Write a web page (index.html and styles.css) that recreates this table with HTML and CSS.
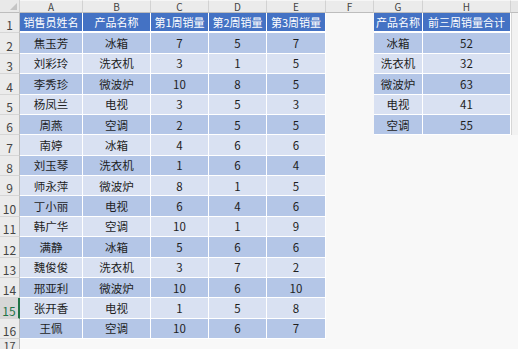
FILE: index.html
```html
<!DOCTYPE html>
<html lang="zh-CN">
<head>
    <meta charset="UTF-8">
    <title>销售统计</title>
    <link rel="stylesheet" href="styles.css">
</head>
<body>
    <div class="sheet">
        <div class="row">
            <div class="corner"></div>
            <div class="hd">A</div><div class="hd">B</div><div class="hd">C</div><div class="hd">D</div><div class="hd">E</div><div class="hd">F</div><div class="hd">G</div><div class="hd">H</div><div class="hd end"></div>
        </div>
        <div class="row">
            <div class="rn">1</div>
            <div class="th">销售员姓名</div><div class="th">产品名称</div><div class="th">第1周销量</div><div class="th">第2周销量</div><div class="th">第3周销量</div>
            <div class="no"></div>
            <div class="th">产品名称</div><div class="th">前三周销量合计</div>
            <div class="no end"></div>
        </div>
        <div class="row dk">
            <div class="rn">2</div>
            <div class="c">焦玉芳</div><div class="c">冰箱</div><div class="c">7</div><div class="c">5</div><div class="c">7</div>
            <div class="no"></div>
            <div class="c">冰箱</div><div class="c">52</div>
            <div class="no end"></div>
        </div>
        <div class="row lt">
            <div class="rn">3</div>
            <div class="c">刘彩玲</div><div class="c">洗衣机</div><div class="c">3</div><div class="c">1</div><div class="c">5</div>
            <div class="no"></div>
            <div class="c">洗衣机</div><div class="c">32</div>
            <div class="no end"></div>
        </div>
        <div class="row dk">
            <div class="rn">4</div>
            <div class="c">李秀珍</div><div class="c">微波炉</div><div class="c">10</div><div class="c">8</div><div class="c">5</div>
            <div class="no"></div>
            <div class="c">微波炉</div><div class="c">63</div>
            <div class="no end"></div>
        </div>
        <div class="row lt">
            <div class="rn">5</div>
            <div class="c">杨凤兰</div><div class="c">电视</div><div class="c">3</div><div class="c">5</div><div class="c">3</div>
            <div class="no"></div>
            <div class="c">电视</div><div class="c">41</div>
            <div class="no end"></div>
        </div>
        <div class="row dk">
            <div class="rn">6</div>
            <div class="c">周燕</div><div class="c">空调</div><div class="c">2</div><div class="c">5</div><div class="c">5</div>
            <div class="no"></div>
            <div class="c">空调</div><div class="c">55</div>
            <div class="no end"></div>
        </div>
        <div class="row lt">
            <div class="rn">7</div>
            <div class="c">南婷</div><div class="c">冰箱</div><div class="c">4</div><div class="c">6</div><div class="c">6</div>
            <div class="no wide"></div>
        </div>
        <div class="row dk">
            <div class="rn">8</div>
            <div class="c">刘玉琴</div><div class="c">洗衣机</div><div class="c">1</div><div class="c">6</div><div class="c">4</div>
            <div class="no wide"></div>
        </div>
        <div class="row lt">
            <div class="rn">9</div>
            <div class="c">师永萍</div><div class="c">微波炉</div><div class="c">8</div><div class="c">1</div><div class="c">5</div>
            <div class="no wide"></div>
        </div>
        <div class="row dk">
            <div class="rn">10</div>
            <div class="c">丁小丽</div><div class="c">电视</div><div class="c">6</div><div class="c">4</div><div class="c">6</div>
            <div class="no wide"></div>
        </div>
        <div class="row lt">
            <div class="rn">11</div>
            <div class="c">韩广华</div><div class="c">空调</div><div class="c">10</div><div class="c">1</div><div class="c">9</div>
            <div class="no wide"></div>
        </div>
        <div class="row dk">
            <div class="rn">12</div>
            <div class="c">满静</div><div class="c">冰箱</div><div class="c">5</div><div class="c">6</div><div class="c">6</div>
            <div class="no wide"></div>
        </div>
        <div class="row lt">
            <div class="rn">13</div>
            <div class="c">魏俊俊</div><div class="c">洗衣机</div><div class="c">3</div><div class="c">7</div><div class="c">2</div>
            <div class="no wide"></div>
        </div>
        <div class="row dk">
            <div class="rn">14</div>
            <div class="c">邢亚利</div><div class="c">微波炉</div><div class="c">10</div><div class="c">6</div><div class="c">10</div>
            <div class="no wide"></div>
        </div>
        <div class="row lt">
            <div class="rn sel">15</div>
            <div class="c">张开香</div><div class="c">电视</div><div class="c">1</div><div class="c">5</div><div class="c">8</div>
            <div class="no wide"></div>
        </div>
        <div class="row dk">
            <div class="rn">16</div>
            <div class="c">王佩</div><div class="c">空调</div><div class="c">10</div><div class="c">6</div><div class="c">7</div>
            <div class="no wide"></div>
        </div>
        <div class="row">
            <div class="rn last">17</div>
            <div class="no full"></div>
        </div>
    </div>
</body>
</html>
```

FILE: styles.css
```css
body { margin: 0; background: #f8f8f8; font-family: "Noto Sans CJK SC", "Noto Sans", sans-serif; color: #1e1e1e; }
.sheet { display: grid; grid-template-columns: 20px 63px 68px 58px 58px 59px 48px 49px 88px 1fr; grid-template-rows: 13px repeat(16, 20.375px) 1fr; height: 349px; overflow: hidden; }
.row { display: contents; }

.corner { background: #e9e9e9; border-right: 1px solid #cfcfcf; border-bottom: 1px solid #bdbdbd; position: relative; }
.corner::after { content: ""; position: absolute; right: 2px; bottom: 2px; border-left: 7px solid transparent; border-bottom: 7px solid #c4c4c4; }
.hd { background: #ebebeb; border-right: 1px solid #d2d2d2; border-bottom: 1px solid #bdbdbd; border-top: 1px solid #f6f6f6; font-size: 10px; line-height: 11px; color: #444; text-align: center; }
.hd.end { border-right: none; background: #e6e6e6; }

.rn { background: #ebebeb; border-right: 1px solid #bdbdbd; border-bottom: 1px solid #d6d6d6; font-size: 12px; line-height: 13px; color: #444; display: flex; align-items: flex-end; justify-content: center; padding-bottom: 1px; overflow: hidden; }
.rn.sel { background: #d6d6d6; color: #217346; border-right: 2px solid #217346; }
.rn.last { align-items: flex-start; padding: 0; font-size: 11px; line-height: 12px; border-bottom: none; }

.th, .c { display: flex; align-items: center; justify-content: center; font-size: 11.5px; border-right: 1px solid #fff; border-bottom: 1px solid #fff; white-space: nowrap; }
.th { background: #4472c4; color: #fff; border-bottom-width: 2px; font-size: 11px; }
.dk .c { background: #b4c6e7; }
.lt .c { background: #d9e1f2; }

.no { background: #f8f8f8; }
.no.end { background: #f2f2f2; border-left: 1px solid #d6d6d6; }
.no.wide { grid-column: span 4; }
.no.full { grid-column: span 9; }
```
